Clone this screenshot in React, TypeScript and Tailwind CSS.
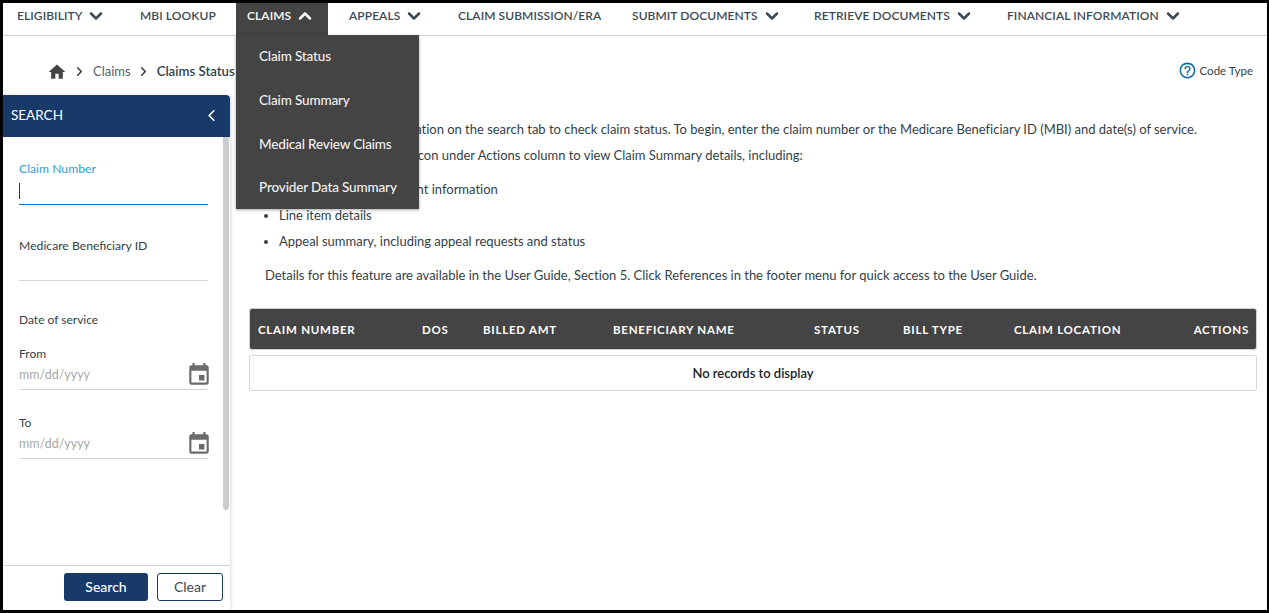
import { ChevronDown, ChevronLeft, ChevronRight, ChevronUp } from "lucide-react";
import { MdEvent, MdHelpOutline, MdHome } from "react-icons/md";

const NAV = [
  { label: "ELIGIBILITY", cls: "ml-[14px] w-[123px]", caret: "down" },
  { label: "MBI LOOKUP", cls: "w-[96px]" },
  { label: "CLAIMS", cls: "w-[92px] pl-[11px] bg-[#444444] text-white", caret: "up" },
  { label: "APPEALS", cls: "ml-[21px] w-[109px]", caret: "down" },
  { label: "CLAIM SUBMISSION/ERA", cls: "w-[174px]" },
  { label: "SUBMIT DOCUMENTS", cls: "w-[182px]", caret: "down" },
  { label: "RETRIEVE DOCUMENTS", cls: "w-[193px]", caret: "down" },
  { label: "FINANCIAL INFORMATION", cls: "", caret: "down" },
];

const MENU = ["Claim Status", "Claim Summary", "Medical Review Claims", "Provider Data Summary"];

function DateField({ label, mt }: { label: string; mt: string }) {
  return (
    <div className={mt}>
      <div className="text-[12px] leading-[16px] text-[#333f48]">{label}</div>
      <div className="flex h-[28px] items-center justify-between border-b border-[#d4d4d4] text-[12.5px] text-[#a8a8a8]">
        <span>mm/dd/yyyy</span>
        <MdEvent className="mb-[2px] mr-[-4px] text-[26px] text-[#6b6b6b]" />
      </div>
    </div>
  );
}

export default function App() {
  return (
    <div className="relative flex h-[613px] w-[1269px] flex-col overflow-hidden border-[3px] border-r-[2px] border-black bg-white font-['Lato','Noto_Sans',sans-serif] text-[#333f48]">
      <nav className="flex h-[33px] shrink-0 items-center border-b border-[#d2d2d2] text-[12px] font-semibold tracking-[0.08px] text-[#3c4a55]">
        {NAV.map((n) => (
          <div key={n.label} className={`flex h-[33px] items-center pb-[7px] ${n.cls}`}>
            <span>{n.label}</span>
            {n.caret === "down" && <ChevronDown size={20} strokeWidth={3} className="ml-[4px]" />}
            {n.caret === "up" && <ChevronUp size={20} strokeWidth={3} className="ml-[4px]" />}
          </div>
        ))}
      </nav>

      <div className="absolute left-[233px] top-[32px] z-10 flex h-[174px] w-[183px] flex-col bg-[#444444] pl-[23px] text-[13.5px] font-medium tracking-[-0.15px] text-[#f0f0f0] shadow-[0_1px_3px_rgba(0,0,0,0.35)]">
        {MENU.map((m) => (
          <div key={m} className="flex h-[43.7px] shrink-0 items-center pb-[1px]">{m}</div>
        ))}
      </div>

      <div className="flex h-[59px] shrink-0 items-start justify-between pr-[14px]">
        <div className="ml-[44px] mt-[25px] flex items-center text-[13px]">
          <MdHome className="mt-[1px] text-[20px] text-[#444444]" />
          <ChevronRight size={15} strokeWidth={2.5} className="ml-[5px] mr-[6px]" />
          <span className="text-[#55616a]">Claims</span>
          <ChevronRight size={15} strokeWidth={2.5} className="ml-[5px] mr-[6px]" />
          <span className="text-[13.2px] font-semibold">Claims Status</span>
        </div>
        <div className="mt-[25px] flex items-center text-[11.5px]">
          <MdHelpOutline className="mr-[3px] text-[19px] text-[#16709f]" />
          <span className="pt-[1px]">Code Type</span>
        </div>
      </div>

      <div className="flex min-h-0 flex-1">
        <aside className="flex w-[227px] shrink-0 flex-col shadow-[1px_0_3px_rgba(0,0,0,0.15)]">
          <div className="flex h-[42px] shrink-0 items-center justify-between rounded-tr-[4px] bg-[#173a69] pb-[2px] pl-[8px] pr-[9px] text-[13.5px] text-white">
            <span>SEARCH</span>
            <ChevronLeft size={19} strokeWidth={2} className="mt-[1px]" />
          </div>
          <div className="flex min-h-0 flex-1">
            <div className="flex-1 pl-[16px] pr-[15px] pt-[24px]">
              <div className="text-[12.2px] leading-[16px] text-[#2f9ed8]">Claim Number</div>
              <div className="flex h-[28px] items-center border-b border-[#0a7cc4]">
                <span className="h-[16px] w-px bg-[#333333]" />
              </div>
              <div className="mt-[32px] pt-[1px] text-[12.2px] leading-[16px]">Medicare Beneficiary ID</div>
              <div className="h-[27px] border-b border-[#d4d4d4]" />
              <div className="mt-[31px] text-[12px] leading-[16px]">Date of service</div>
              <DateField label="From" mt="mt-[18px]" />
              <DateField label="To" mt="mt-[25px]" />
            </div>
            <div className="w-[7px] shrink-0 pr-px">
              <div className="h-[373px] rounded-b-[3px] bg-[#cccccc]" />
            </div>
          </div>
          <div className="flex h-[45px] shrink-0 items-start justify-end gap-[9px] border-t border-[#d4d4d4] pr-[7px] pt-[7px] text-[14px]">
            <button className="h-[28px] w-[84px] rounded-[3px] bg-[#173a69] pb-[2px] font-medium text-white">Search</button>
            <button className="h-[28px] w-[66px] rounded-[3px] border border-[#173a69] pb-[2px] text-[#3c4a55]">Clear</button>
          </div>
        </aside>

        <main className="min-w-0 flex-1 pl-[19px] pr-[10px] text-[13px] tracking-[-0.013px]">
          <div className="pl-[16px] pt-[25px] leading-[18px]">
            <p>Please input search information on the search tab to check claim status. To begin, enter the claim number or the Medicare Beneficiary ID (MBI) and date(s) of service.</p>
            <p className="mt-[8px]">Click the magnifying glass icon under Actions column to view Claim Summary details, including:</p>
            <ul className="mt-[16px] list-disc space-y-[8px] pl-[14px]">
              <li>Claim details and payment information</li>
              <li>Line item details</li>
              <li>Appeal summary, including appeal requests and status</li>
            </ul>
            <p className="mt-[16px]">Details for this feature are available in the User Guide, Section 5. Click References in the footer menu for quick access to the User Guide.</p>
          </div>
          <div className="mt-[24px] grid h-[42px] grid-cols-[164px_61px_130px_201px_89px_111px_1fr_auto] items-center rounded-[3px] border border-[#cfcfcf] bg-[#444444] pl-[8px] pr-[7px] pt-[1px] text-[11.5px] font-bold tracking-[0.75px] text-white">
            <span>CLAIM NUMBER</span>
            <span>DOS</span>
            <span>BILLED AMT</span>
            <span>BENEFICIARY NAME</span>
            <span>STATUS</span>
            <span>BILL TYPE</span>
            <span>CLAIM LOCATION</span>
            <span>ACTIONS</span>
          </div>
          <div className="mt-[5px] flex h-[36px] items-center justify-center rounded-[2px] border border-[#d8d8d8] pt-[1px] font-semibold text-[#222222]">
            No records to display
          </div>
        </main>
      </div>
    </div>
  );
}
